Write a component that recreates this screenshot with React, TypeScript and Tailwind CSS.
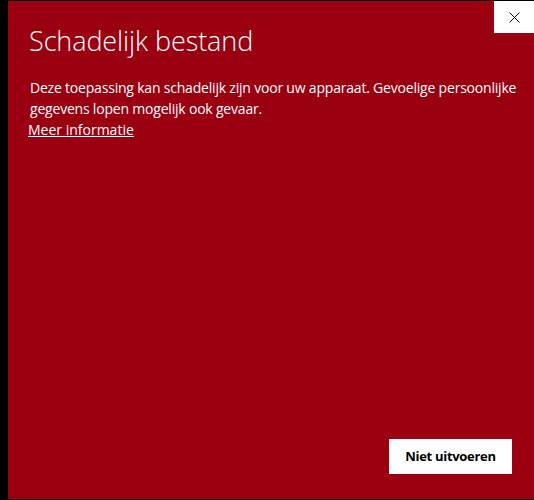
import React from "react";

export default function App() {
  return (
    <div
      className="w-[534px] h-[500px] bg-black pl-[8px] pt-[1px] pb-[1px] overflow-hidden"
      style={{ fontFamily: '"Open Sans", "Noto Sans", sans-serif' }}
    >
      <div className="relative h-full w-full bg-[#9a0010] text-white flex flex-col">
        <button className="absolute right-0 top-0 w-[40px] h-[32px] bg-white flex items-center justify-center">
          <svg width="11" height="11" viewBox="0 0 11 11">
            <path d="M0.5 0.5 L10.5 10.5 M10.5 0.5 L0.5 10.5" stroke="#000" strokeWidth="1" />
          </svg>
        </button>
        <div className="pl-[21px] pt-[22px]">
          <h1 className="text-[27px] leading-[36px] font-light tracking-[-0.1px]">Schadelijk bestand</h1>
          <p className="mt-[18px] pl-[1px] text-[14px] leading-[21px] tracking-[-0.2px]">
            Deze toepassing kan schadelijk zijn voor uw apparaat. Gevoelige persoonlijke
            <br />
            gegevens lopen mogelijk ook gevaar.
          </p>
          <a className="block -ml-[1px] text-[14px] leading-[21px] underline tracking-[0px]">Meer informatie</a>
        </div>
        <div className="flex-1" />
        <div className="flex justify-end pr-[22px] pb-[25px]">
          <button className="w-[123px] h-[35px] bg-white text-black text-[13px] font-bold tracking-[-0.3px]">
            Niet uitvoeren
          </button>
        </div>
      </div>
    </div>
  );
}
